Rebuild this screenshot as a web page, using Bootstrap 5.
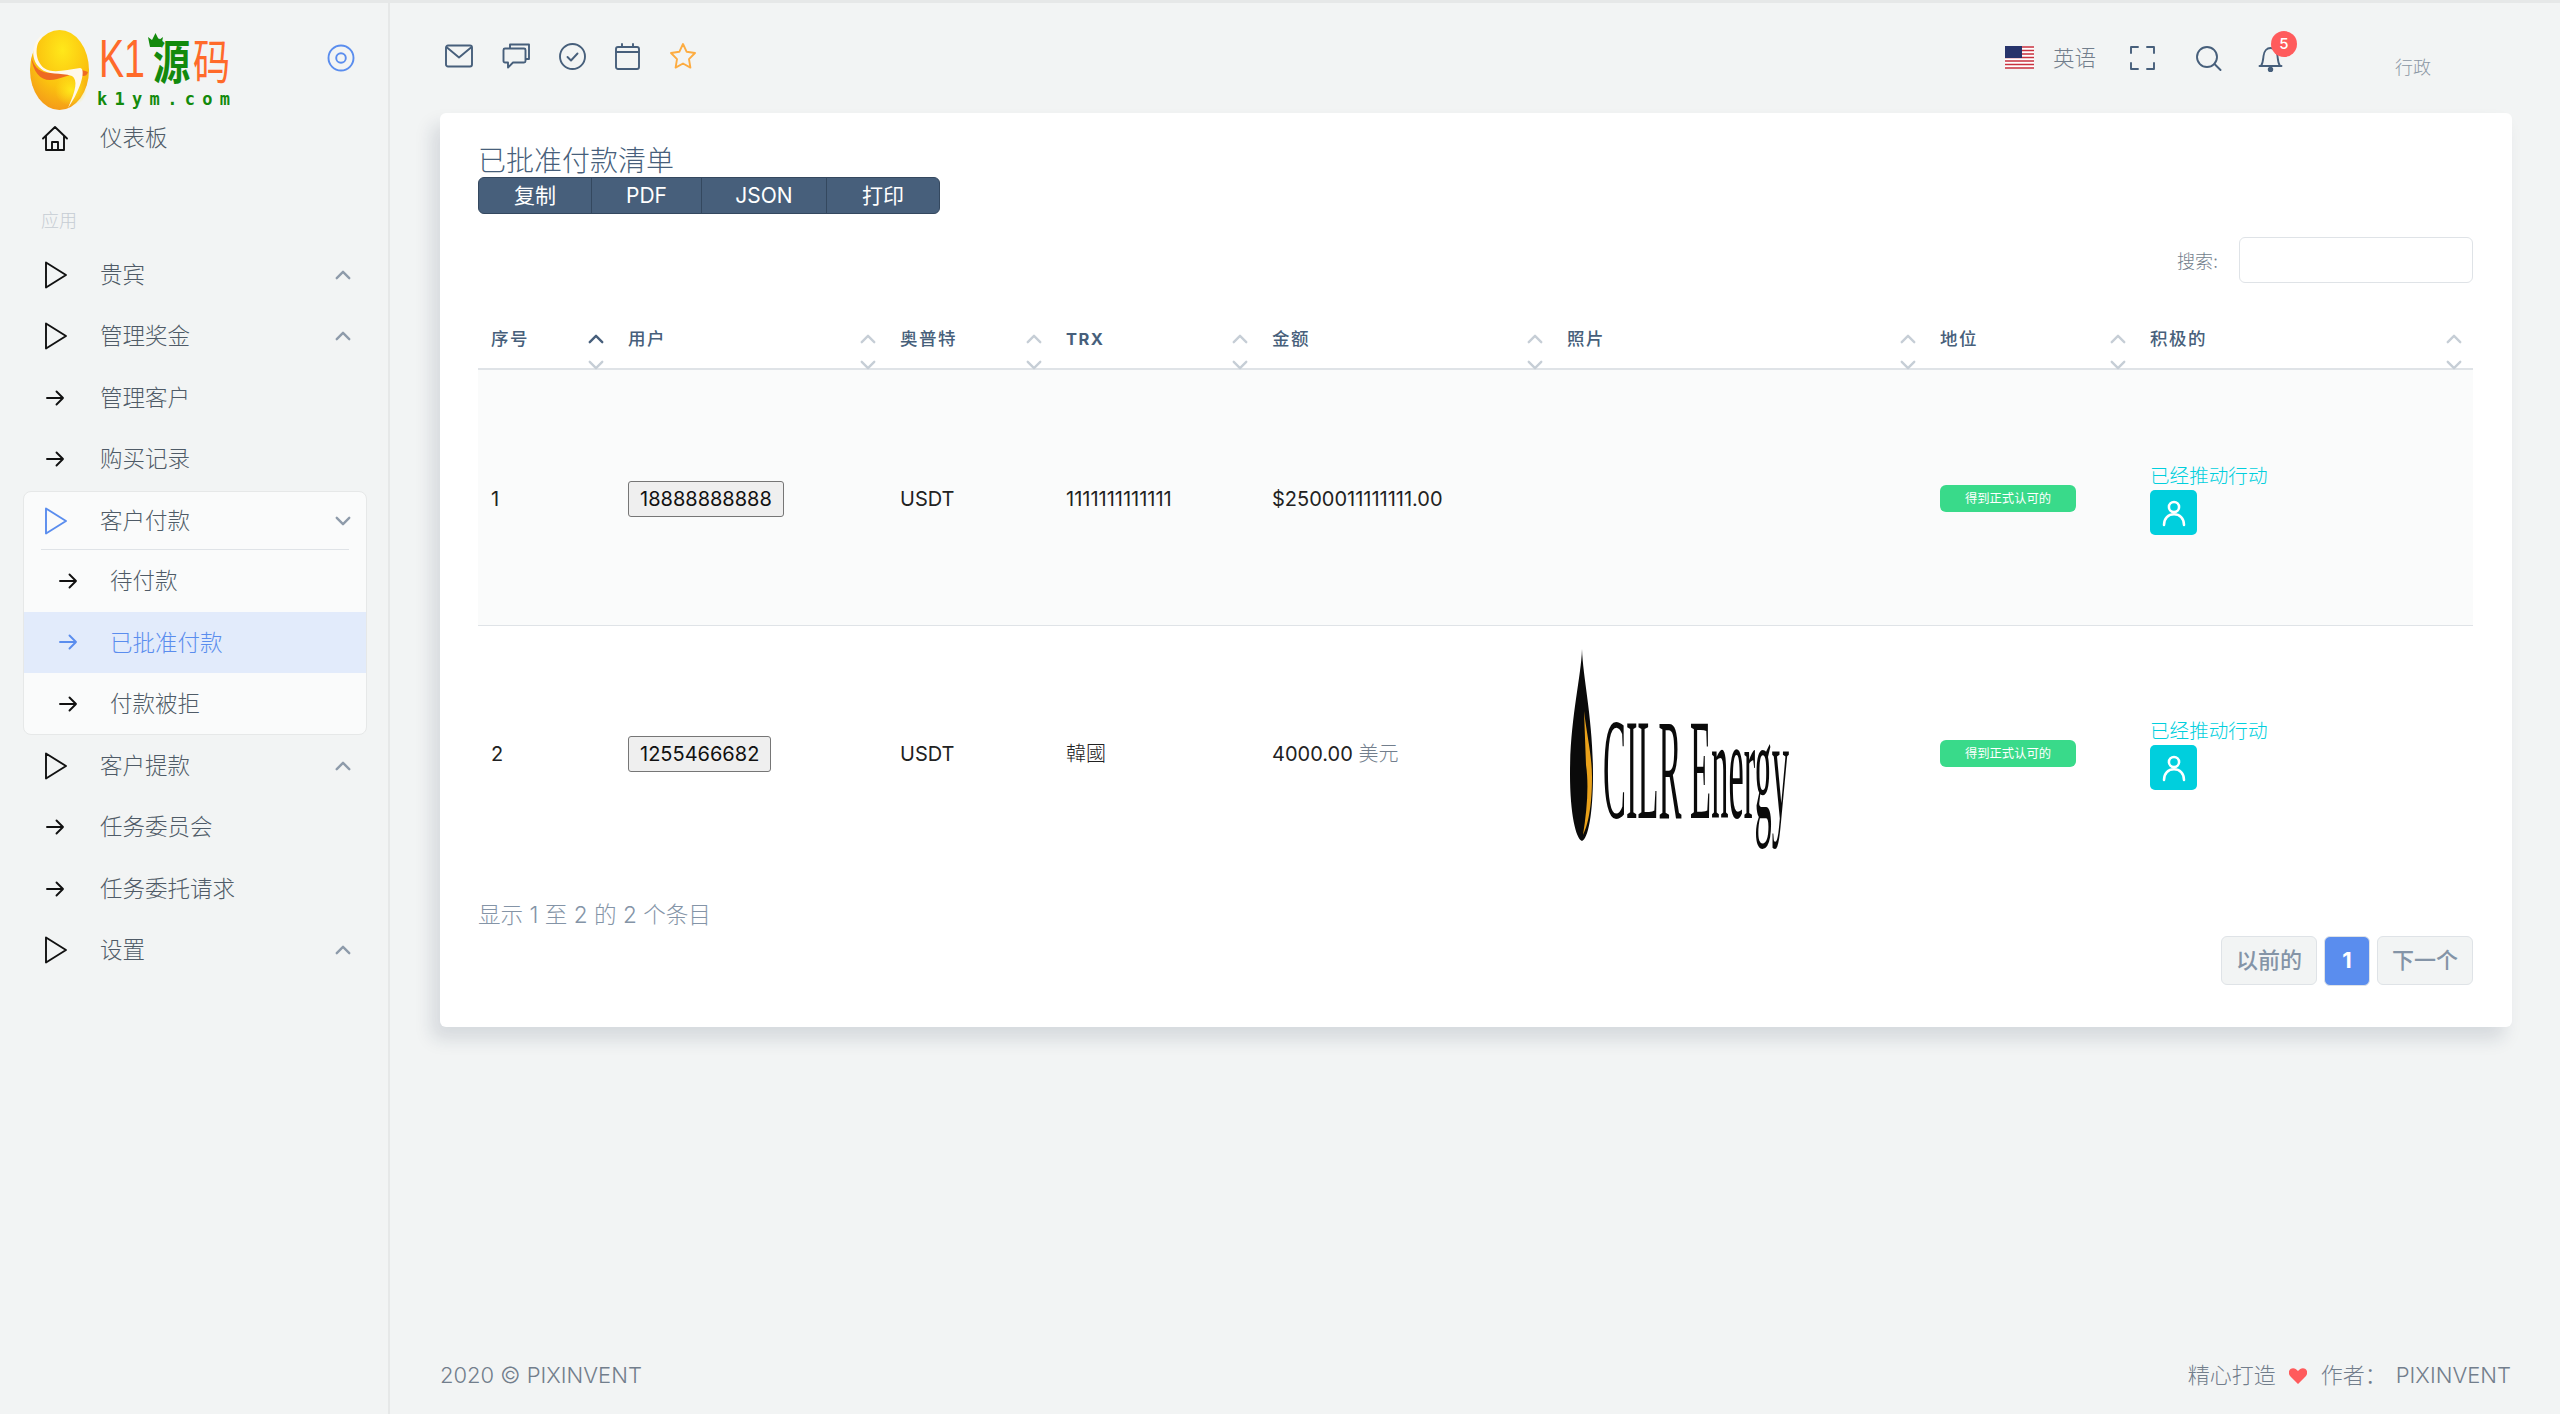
<!DOCTYPE html>
<html lang="zh">
<head>
  <meta charset="UTF-8">
  <title>已批准付款清单</title>
  <link href="https://cdn.jsdelivr.net/npm/bootstrap@5.3.3/dist/css/bootstrap.min.css" rel="stylesheet">
  <style>
    body {
      background: #f2f4f4;
      border-top: 3px solid #e6e8e8;
      font-family: Inter, "Noto Sans CJK SC", sans-serif;
      color: #475f7b;
    }
    .ico { fill: none; stroke: currentColor; stroke-width: 1.9; stroke-linecap: round; stroke-linejoin: round; flex: none; }

    /* sidebar */
    .side { width: 390px; flex: none; border-right: 2px solid #e6e8e8; padding: 0 21px 0 23px; }
    .side-logo { height: 104px; }
    .logo-pic { margin: 27px 0 0 7px; overflow: visible; }
    .side-target { margin: 41px 12px 0 0; color: #5a8dee; }
    .side-row { height: 61.3px; padding: 0 14px 0 18px; color: #4f5b67; font-size: 22.5px; font-weight: 300; }
    .side-row .ico { color: #111; }
    .side-row .lead-ico { width: 28px; margin-right: 31px; }
    .side-row .chev { color: #8e9baa; margin-left: auto; stroke-width: 1.9; }
    .side-label { height: 76px; padding: 0 0 10px 18px; font-size: 18px; color: #c6ccd3; font-weight: 300; }
    .side-group { background: #fafbfb; border: 1px solid #e6e8e8; border-radius: 8px; margin-top: 2px; overflow: hidden; }
    .side-group .side-row:first-child { height: 58px; margin: 0 17px; padding: 0; border-bottom: 1px solid #dfe3e7; }
    .side-group .side-row:first-child .ico { color: #5a8dee; }
    .side-group .side-row:first-child .chev { color: #8e9baa; margin-right: -4px; }
    .side-row.side-sub { padding-left: 32px; }
    .side-sub .lead-ico { margin-right: 30px; width: 24px; }
    .side-on { background: #e2ebfb; color: #5a8dee; }
    .side-row.side-on .ico { color: #5a8dee; }

    /* top bar */
    .topbar { height: 110px; padding: 39px 129px 0 55px; color: #475f7b; }
    .tool-list { gap: 29px; }
    .star-ico { color: #fdac41; }
    .lang-text { font-size: 21.5px; font-weight: 300; color: #727e8c; margin: 0 34px 0 19px; }
    .gap-a { margin-right: 40px; }
    .gap-b { margin-right: 36px; }
    .bell-box { margin-right: 112px; }
    .bell-num {
      top: -15px; left: 13px; width: 26px; height: 26px;
      background: #ff5b5c; color: #fff; font-size: 15px; font-weight: 500;
    }
    .admin-text { font-size: 18px; font-weight: 300; color: #8a96a3; padding-top: 12px; }

    /* card */
    .list-card {
      margin: 0 48px 0 50px; height: 914px; border: 0; border-radius: 6px;
      padding: 32px 39px 0 38px;
      box-shadow: -8px 12px 18px rgba(25, 42, 70, .13);
    }
    .list-title { font-size: 28px; line-height: 32px; font-weight: 300; color: #475f7b; }
    .export-btns { width: 462px; height: 37px; }
    .export-btns .btn {
      background: #475f7b; border-color: #34485f; color: #fff;
      font-size: 21px; line-height: 1; padding: 0;
    }
    .export-btns .btn:nth-child(1), .export-btns .btn:nth-child(4) { flex: 0 0 114px; }
    .export-btns .btn:nth-child(2) { flex: 0 0 111px; }
    .export-btns .btn:nth-child(3) { flex: 0 0 126px; }
    .search-row { margin-top: 23px; height: 46px; }
    .search-row label { font-size: 18px; color: #727e8c; font-weight: 300; margin-right: 21px; padding-top: 2px; }
    .search-row .form-control { width: 234px; height: 46px; border-color: #dfe3e7; border-radius: 6px; }

    .pay-table { table-layout: fixed; width: 1995px; margin: 39px 0 0; }
    .pay-table th {
      position: relative; height: 47px; padding: 0 13px 12px; vertical-align: middle;
      font-size: 17.5px; letter-spacing: 1.5px; font-weight: 500; color: #475f7b;
      border-bottom: 2px solid #dfe3e7; background: #fff;
    }
    .pay-table th.col-d { font-weight: 700; font-size: 16.5px; }
    .pay-table td {
      height: 255px; padding: 3px 13px 0; vertical-align: middle;
      font-size: 20px; color: #222; border-bottom: 1px solid #dfe3e7;
    }
    .pay-table .row-odd td { height: 256px; }
    .pay-table tr:last-child td { border-bottom: 0; height: 254px; }
    .row-odd td { background: #fafbfb; }
    .col-a { width: 137px; } .col-b { width: 272px; } .col-c { width: 166px; } .col-d { width: 206px; }
    .col-e { width: 295px; } .col-f { width: 373px; } .col-g { width: 210px; } .col-h { width: 336px; }
    .sort-up, .sort-down { position: absolute; right: 9px; color: #c6ced6; line-height: 0; z-index: 1; }
    .sort-up { top: 7px; }
    .sort-down { bottom: -7px; }
    .sort-on { color: #475f7b; }
    .user-btn {
      background: #efefef; border: 1px solid #767676; border-radius: 3px; color: #111;
      font-size: 20px; padding: 0 11px; height: 36px; font-family: Inter, sans-serif;
    }
    .soft-text { font-weight: 300; color: #727e8c; }
    .state-tag {
      display: block; width: 136px; height: 27px; padding: 0; line-height: 27px;
      background: #39da8a; color: #fff; font-size: 12.3px; font-weight: 400; border-radius: 6px;
    }
    .act-text { color: #00cfdd; font-size: 19.6px; font-weight: 300; line-height: 28px; }
    .act-btn {
      width: 47px; height: 45px; padding: 0; background: #00cfdd; border: 0; border-radius: 5px; color: #fff;
    }
    .info-text { margin-top: 22px; font-size: 22.6px; line-height: 28px; color: #8494a7; font-weight: 300; }
    .pager { gap: 8px; margin: 7px 0 0; }
    .pager .page-link {
      height: 49px; padding: 0 14px; line-height: 47px; font-size: 22px; font-weight: 500;
      color: #8494a7; background: #f2f4f4; border: 1px solid #dfe3e7; border-radius: 6px !important;
    }
    .pager .active .page-link { width: 46px; height: 50px; padding: 0; text-align: center; background: #5a8dee; border-color: #dfe3e7; color: #fff; font-weight: 700; }

    /* footer */
    .page-foot { margin: auto 49px 0 50px; height: 55px; font-size: 22px; font-weight: 300; color: #727e8c; }
    .heart-ico { fill: #ff5b5c; stroke: none; margin: 0 14px 0 13px; }
    .foot-name { margin-left: 9px; }
  </style>
</head>
<body>

<svg width="0" height="0" class="d-block">
  <symbol id="i-play" viewBox="0 0 28 28"><polygon points="5,1.500 25,14 5,26.500"/></symbol>
  <symbol id="i-arrow" viewBox="0 0 24 24"><path d="M4 12h16M13.500 5.500 20 12l-6.500 6.500"/></symbol>
  <symbol id="i-up" viewBox="0 0 16 16"><path d="M3 10.500l5-5 5 5"/></symbol>
  <symbol id="i-down" viewBox="0 0 16 16"><path d="M3 5.500l5 5 5-5"/></symbol>
  <symbol id="i-user" viewBox="0 0 24 24"><circle cx="12" cy="7.500" r="3.800"/><path d="M4.500 21c0-5 3.200-8 7.500-8s7.500 3 7.500 8"/></symbol>
</svg>

<div class="d-flex">
  <aside class="side">
    <div class="side-logo d-flex justify-content-between">
      <svg class="logo-pic" width="202" height="82" viewBox="0 0 202 82">
        <defs>
          <radialGradient id="egg" cx="0.55" cy="0.25" r="0.85">
            <stop offset="0" stop-color="#ffe81a"/><stop offset="0.55" stop-color="#fbc20f"/><stop offset="1" stop-color="#f28f1c"/>
          </radialGradient>
          <radialGradient id="egg-low">
            <stop offset="0" stop-color="#ffe81a"/><stop offset="1" stop-color="#ffe81a" stop-opacity="0"/>
          </radialGradient>
        </defs>
        <ellipse cx="29.500" cy="40" rx="29.500" ry="40" fill="url(#egg)"/>
        <circle cx="41" cy="60" r="16" fill="url(#egg-low)"/>
        <path d="M1 26C5 44 18 44 30 42 40 40 50 38 58 42 56 48 52 46 46 44 38 44 30 50 20 50 10 50 3 42 1 26z" fill="#ee6a22"/>
        <path d="M15 3C4 12 4 30 14 38 22 44 36 40 50 38 56 38 52 58 38 78 46 60 48 50 42 46 30 42 18 46 10 38-1 28 2 10 15 3z" fill="#fff8ea"/>
        <text x="69" y="47" font-family="Liberation Sans, sans-serif" font-size="54" fill="#ff6a2a" textLength="46" lengthAdjust="spacingAndGlyphs">K1</text>
        <text transform="translate(123 49) scale(.93 1.2)" font-family="Noto Sans CJK SC, sans-serif" font-size="40" font-weight="700" fill="#138a0c">源</text>
        <text transform="translate(163 49) scale(.93 1.2)" font-family="Noto Sans CJK SC, sans-serif" font-size="40" fill="#ff6a2a">码</text>
        <path d="M118 7l4 3 3.500-7 3.500 7 4-3-2 10h-11z" fill="#138a0c"/>
        <text x="67" y="75" font-family="DejaVu Sans Mono, monospace" font-size="17" font-weight="700" fill="#138a0c" textLength="133">k1ym.com</text>
      </svg>
      <svg class="side-target ico" width="28" height="28" viewBox="0 0 28 28" stroke-width="3"><circle cx="14" cy="14" r="12.500"/><circle cx="14" cy="14" r="4.800"/></svg>
    </div>

    <div class="side-row d-flex align-items-center">
      <svg class="ico lead-ico" width="28" height="28" viewBox="0 0 28 28" stroke-width="3"><path d="M2 14.500 14 3l12 11.500M5 12v14h18V12M11 26v-8h6v8"/></svg>仪表板
    </div>
    <div class="side-label d-flex align-items-end">应用</div>
    <div class="side-row d-flex align-items-center">
      <svg class="ico lead-ico" width="28" height="28" stroke-width="3.200"><use href="#i-play"/></svg>贵宾
      <svg class="ico chev" width="20" height="20"><use href="#i-up"/></svg>
    </div>
    <div class="side-row d-flex align-items-center">
      <svg class="ico lead-ico" width="28" height="28" stroke-width="3.200"><use href="#i-play"/></svg>管理奖金
      <svg class="ico chev" width="20" height="20"><use href="#i-up"/></svg>
    </div>
    <div class="side-row d-flex align-items-center">
      <svg class="ico lead-ico" width="28" height="24" stroke-width="3"><use href="#i-arrow"/></svg>管理客户
    </div>
    <div class="side-row d-flex align-items-center">
      <svg class="ico lead-ico" width="28" height="24" stroke-width="3"><use href="#i-arrow"/></svg>购买记录
    </div>

    <div class="side-group">
      <div class="side-row d-flex align-items-center">
        <svg class="ico lead-ico" width="28" height="28" stroke-width="3.200"><use href="#i-play"/></svg>客户付款
        <svg class="ico chev" width="20" height="20"><use href="#i-down"/></svg>
      </div>
      <div class="side-row side-sub d-flex align-items-center">
        <svg class="ico lead-ico" width="24" height="24" stroke-width="3"><use href="#i-arrow"/></svg>待付款
      </div>
      <div class="side-row side-sub side-on d-flex align-items-center">
        <svg class="ico lead-ico" width="24" height="24" stroke-width="3"><use href="#i-arrow"/></svg>已批准付款
      </div>
      <div class="side-row side-sub d-flex align-items-center">
        <svg class="ico lead-ico" width="24" height="24" stroke-width="3"><use href="#i-arrow"/></svg>付款被拒
      </div>
    </div>

    <div class="side-row d-flex align-items-center">
      <svg class="ico lead-ico" width="28" height="28" stroke-width="3.200"><use href="#i-play"/></svg>客户提款
      <svg class="ico chev" width="20" height="20"><use href="#i-up"/></svg>
    </div>
    <div class="side-row d-flex align-items-center">
      <svg class="ico lead-ico" width="28" height="24" stroke-width="3"><use href="#i-arrow"/></svg>任务委员会
    </div>
    <div class="side-row d-flex align-items-center">
      <svg class="ico lead-ico" width="28" height="24" stroke-width="3"><use href="#i-arrow"/></svg>任务委托请求
    </div>
    <div class="side-row d-flex align-items-center">
      <svg class="ico lead-ico" width="28" height="28" stroke-width="3.200"><use href="#i-play"/></svg>设置
      <svg class="ico chev" width="20" height="20"><use href="#i-up"/></svg>
    </div>
  </aside>

  <main class="flex-grow-1 d-flex flex-column" style="min-height: 1411px">
    <header class="topbar d-flex align-items-start">
      <div class="tool-list d-flex align-items-center">
        <svg class="ico" width="28" height="24" viewBox="0 0 28 24"><rect x="1" y="1.500" width="26" height="21" rx="2"/><path d="M2 3.500l12 10 12-10"/></svg>
        <svg class="ico" width="28" height="26" viewBox="0 0 28 26"><path d="M8 5V1.500h19V16h-3"/><path d="M3 5.500h19a1.500 1.500 0 0 1 1.500 1.500v11a1.500 1.500 0 0 1-1.500 1.500H11l-5 5v-5H3A1.500 1.500 0 0 1 1.500 18V7A1.500 1.500 0 0 1 3 5.500z"/></svg>
        <svg class="ico" width="27" height="27" viewBox="0 0 27 27"><circle cx="13.500" cy="13.500" r="12.500"/><path d="M8.500 14l3.500 3.500 6.500-7"/></svg>
        <svg class="ico" width="25" height="27" viewBox="0 0 25 27" stroke-width="2.200"><rect x="1" y="4" width="23" height="22" rx="2"/><path d="M1 9h23M7 1v3M18 1v3"/></svg>
        <svg class="ico star-ico" width="28" height="28" viewBox="0 0 28 28" stroke-width="2.200"><path d="M14 2l3.700 7.800 8.300 1.200-6 6.100 1.400 8.500L14 21.500l-7.400 4.100L8 17.100l-6-6.100 8.300-1.200z"/></svg>
      </div>
      <div class="ms-auto d-flex align-items-start">
        <svg class="mt-1" width="29" height="23" viewBox="0 0 29 23">
          <rect width="29" height="23" fill="#fff"/>
          <path d="M0 1h29M0 4.500h29M0 8h29M0 11.500h29M0 15h29M0 18.500h29M0 22h29" stroke="#c8313e" stroke-width="1.700"/>
          <rect width="17" height="12" fill="#27346b"/>
        </svg>
        <span class="lang-text">英语</span>
        <svg class="ico gap-a mt-1" width="25" height="24" viewBox="0 0 25 24" stroke-width="2.400"><path d="M1 7V1h7M17 1h7v6M24 17v6h-7M8 23H1v-6"/></svg>
        <svg class="ico gap-b mt-1" width="27" height="25" viewBox="0 0 27 25" stroke-width="2.200"><circle cx="12" cy="11" r="10"/><path d="M19.500 18l6 6"/></svg>
        <div class="bell-box position-relative mt-1">
          <svg class="ico d-block" width="25" height="26" viewBox="0 0 25 26"><path d="M3 20c2-3 2-5 2.500-10C6 5 9 2 12.500 2S19 5 19.500 10c.5 5 .5 7 2.500 10z"/><path d="M1.500 20h22"/><circle cx="12.500" cy="23.500" r="1.800" fill="currentColor"/></svg>
          <span class="bell-num position-absolute rounded-circle d-flex align-items-center justify-content-center">5</span>
        </div>
        <span class="admin-text">行政</span>
      </div>
    </header>

    <section class="card list-card">
      <div class="list-title">已批准付款清单</div>
      <div class="btn-group export-btns">
        <button class="btn">复制</button>
        <button class="btn">PDF</button>
        <button class="btn">JSON</button>
        <button class="btn">打印</button>
      </div>
      <div class="search-row d-flex justify-content-end align-items-center">
        <label for="pay-search">搜索:</label>
        <input id="pay-search" type="text" class="form-control">
      </div>

      <table class="table pay-table">
        <thead>
          <tr>
            <th class="col-a">序号<span class="sort-up sort-on"><svg class="ico" width="20" height="20" stroke-width="2.600"><use href="#i-up"/></svg></span><span class="sort-down"><svg class="ico" width="20" height="20" stroke-width="2.400"><use href="#i-down"/></svg></span></th>
            <th class="col-b">用户<span class="sort-up"><svg class="ico" width="20" height="20" stroke-width="2.400"><use href="#i-up"/></svg></span><span class="sort-down"><svg class="ico" width="20" height="20" stroke-width="2.400"><use href="#i-down"/></svg></span></th>
            <th class="col-c">奥普特<span class="sort-up"><svg class="ico" width="20" height="20" stroke-width="2.400"><use href="#i-up"/></svg></span><span class="sort-down"><svg class="ico" width="20" height="20" stroke-width="2.400"><use href="#i-down"/></svg></span></th>
            <th class="col-d">TRX<span class="sort-up"><svg class="ico" width="20" height="20" stroke-width="2.400"><use href="#i-up"/></svg></span><span class="sort-down"><svg class="ico" width="20" height="20" stroke-width="2.400"><use href="#i-down"/></svg></span></th>
            <th class="col-e">金额<span class="sort-up"><svg class="ico" width="20" height="20" stroke-width="2.400"><use href="#i-up"/></svg></span><span class="sort-down"><svg class="ico" width="20" height="20" stroke-width="2.400"><use href="#i-down"/></svg></span></th>
            <th class="col-f">照片<span class="sort-up"><svg class="ico" width="20" height="20" stroke-width="2.400"><use href="#i-up"/></svg></span><span class="sort-down"><svg class="ico" width="20" height="20" stroke-width="2.400"><use href="#i-down"/></svg></span></th>
            <th class="col-g">地位<span class="sort-up"><svg class="ico" width="20" height="20" stroke-width="2.400"><use href="#i-up"/></svg></span><span class="sort-down"><svg class="ico" width="20" height="20" stroke-width="2.400"><use href="#i-down"/></svg></span></th>
            <th class="col-h">积极的<span class="sort-up"><svg class="ico" width="20" height="20" stroke-width="2.400"><use href="#i-up"/></svg></span><span class="sort-down"><svg class="ico" width="20" height="20" stroke-width="2.400"><use href="#i-down"/></svg></span></th>
          </tr>
        </thead>
        <tbody>
          <tr class="row-odd">
            <td>1</td>
            <td><button class="user-btn">18888888888</button></td>
            <td>USDT</td>
            <td>1111111111111</td>
            <td>$2500011111111.00</td>
            <td></td>
            <td><span class="badge state-tag">得到正式认可的</span></td>
            <td>
              <div class="act-text">已经推动行动</div>
              <button class="act-btn d-flex align-items-center justify-content-center"><svg class="ico" width="32" height="32" stroke-width="1.700"><use href="#i-user"/></svg></button>
            </td>
          </tr>
          <tr>
            <td>2</td>
            <td><button class="user-btn">1255466682</button></td>
            <td>USDT</td>
            <td class="soft-text">韓國</td>
            <td>4000.00 <span class="soft-text">美元</span></td>
            <td>
              <svg class="d-block" width="226" height="210" viewBox="0 0 226 210">
                <path d="M15 0c1 30 11 70 11 125 0 40-5 65-11 67-6-2-12-27-12-67C3 70 14 30 15 0z" fill="#0a0a0a"/>
                <path d="M17 62c3 25 8 45 8 66 0 30-4 48-9 58 4-25 6-50 3-70z" fill="#e9a11a"/>
                <text transform="translate(36 169) scale(1 4)" font-family="Liberation Serif, serif" font-size="36" textLength="186" lengthAdjust="spacingAndGlyphs" fill="#0a0a0a">CILR Energy</text>
              </svg>
            </td>
            <td><span class="badge state-tag">得到正式认可的</span></td>
            <td>
              <div class="act-text">已经推动行动</div>
              <button class="act-btn d-flex align-items-center justify-content-center"><svg class="ico" width="32" height="32" stroke-width="1.700"><use href="#i-user"/></svg></button>
            </td>
          </tr>
        </tbody>
      </table>

      <div class="info-text">显示 1 至 2 的 2 个条目</div>
      <ul class="pagination pager justify-content-end">
        <li class="page-item"><a class="page-link" href="#">以前的</a></li>
        <li class="page-item active"><a class="page-link" href="#">1</a></li>
        <li class="page-item"><a class="page-link" href="#">下一个</a></li>
      </ul>
    </section>

    <footer class="page-foot d-flex justify-content-between align-items-start">
      <span>2020 © PIXINVENT</span>
      <span class="d-flex align-items-center">
        <span>精心打造</span>
        <svg class="ico heart-ico" width="18" height="16" viewBox="0 0 18 16"><path d="M9 16 1.500 8.500C-1 6-.5 2.500 1.500 1 4-.7 7 .3 9 3c2-2.700 5-3.700 7.500-2 2 1.500 2.500 5 0 7.500z"/></svg>
        <span>作者&#xFF1A;</span>
        <span class="foot-name">PIXINVENT</span>
      </span>
    </footer>
  </main>
</div>

<script src="https://cdn.jsdelivr.net/npm/bootstrap@5.3.3/dist/js/bootstrap.bundle.min.js"></script>
</body>
</html>
